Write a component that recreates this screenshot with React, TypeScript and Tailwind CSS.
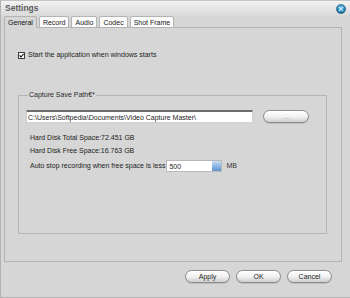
import { useState } from "react";

const TABS = ["General", "Record", "Audio", "Codec", "Shot Frame"];

function PillButton({ label, className = "" }: { label: string; className?: string }) {
  return (
    <button
      className={
        "flex h-[13px] w-[45px] items-center justify-center rounded-full border border-[#8c8c8c] bg-gradient-to-b from-[#ffffff] via-[#f1f1f1] to-[#cfcfcf] leading-none shadow-[0_1px_0_#bdbdbd] " +
        className
      }
    >
      {label}
    </button>
  );
}

function CloseButton() {
  return (
    <svg width="10" height="10" viewBox="0 0 10 10">
      <defs>
        <radialGradient id="cb" cx="50%" cy="40%" r="60%">
          <stop offset="0%" stopColor="#7fd0f2" />
          <stop offset="60%" stopColor="#2f8fc4" />
          <stop offset="100%" stopColor="#16577f" />
        </radialGradient>
      </defs>
      <circle cx="5" cy="5" r="4.6" fill="url(#cb)" stroke="#2a5f80" strokeWidth="0.6" />
      <path d="M3.3 3.3 L6.7 6.7 M6.7 3.3 L3.3 6.7" stroke="#d9f1fb" strokeWidth="1.1" strokeLinecap="round" />
    </svg>
  );
}

export default function App() {
  const [tab, setTab] = useState("General");
  const [autoStart, setAutoStart] = useState(true);

  return (
    <div className="flex h-[298px] w-[350px] flex-col overflow-hidden border-b border-l border-[#b2b2b2] bg-[#d6d6d6] font-['Liberation_Sans',Arial,sans-serif] text-[7px] text-[#1c1c1c]">
      {/* title bar */}
      <div className="flex h-[16px] shrink-0 items-center justify-between border-t border-[#c4c4c4] bg-gradient-to-b from-[#f3f3f3] to-[#d9d9d9] pl-[4px] pr-[4px]">
        <span className="text-[8.5px] font-bold text-[#5b5b5b]">Settings</span>
        <CloseButton />
      </div>

      {/* tabs */}
      <div className="relative z-10 -mb-px flex h-[12px] shrink-0 gap-[2px] pl-[3px]">
        {TABS.map((t) => (
          <button
            key={t}
            onClick={() => setTab(t)}
            className={
              "flex h-[12px] items-center rounded-t-[2px] border border-[#b3b3b3] px-[3px] leading-none " +
              (tab === t ? "border-b-[#d6d6d6] bg-[#d6d6d6] text-[#111]" : "bg-[#fbfbfb] text-[#222]")
            }
          >
            {t}
          </button>
        ))}
      </div>

      {/* panel */}
      <div className="ml-[3px] flex h-[235px] w-[338px] shrink-0 flex-col border border-[#b3b3b3] pl-[13px] pt-[23px]">
        <label className="flex h-[8px] items-center gap-[3px]">
          <span
            onClick={() => setAutoStart(!autoStart)}
            className="flex h-[7px] w-[7px] items-center justify-center border border-[#3a3a3a] bg-white"
          >
            {autoStart && (
              <svg width="5" height="5" viewBox="0 0 5 5">
                <path d="M0.5 2.4 L2 4 L4.6 0.8" fill="none" stroke="#111" strokeWidth="1.1" />
              </svg>
            )}
          </span>
          <span>Start the application when windows starts</span>
        </label>

        <fieldset className="mt-[32px] h-[143px] w-[309px] border border-[#b5b5b5] pl-[7px]">
          <legend className="ml-[2px] px-[1px] leading-[8px] text-[#2a2a2a]">Capture Save Path€*</legend>

          <div className="mt-[11px] flex items-center">
            <div className="flex h-[13px] w-[227px] items-center border-x border-b border-t-2 border-[#cfcfcf] border-t-[#6e6e6e] bg-white pl-[1px] leading-none">
              C:\Users\Softpedia\Documents\Video Capture Master\
            </div>
            <button className="-mt-[1px] ml-[10px] flex h-[13px] w-[46px] items-center justify-center rounded-full border border-[#8c8c8c] bg-gradient-to-b from-[#ffffff] via-[#f1f1f1] to-[#cfcfcf] leading-none text-[#8a8a8a] shadow-[0_1px_0_#bdbdbd]">
              ...
            </button>
          </div>

          <div className="mt-[8px] pl-[4px] leading-[13px]">Hard Disk Total Space:72.451 GB</div>
          <div className="pl-[4px] leading-[13px]">Hard Disk Free Space:16.763 GB</div>

          <div className="mt-[3px] flex h-[12px] items-center pl-[4px]">
            <span>Auto stop recording when free space is less</span>
            <div className="ml-[1px] flex h-[12px] w-[56px] items-stretch border border-[#b9b9b9] bg-white">
              <span className="flex flex-1 items-center pl-[2px] leading-none">500</span>
              <span className="w-[9px] bg-gradient-to-b from-[#c9def2] via-[#8db8e4] to-[#5f95cf]" />
            </div>
            <span className="ml-[4px] text-[#333]">MB</span>
          </div>
        </fieldset>
      </div>

      {/* footer buttons */}
      <div className="mt-[8px] flex justify-end gap-[6px] pr-[18px]">
        <PillButton label="Apply" />
        <PillButton label="OK" />
        <PillButton label="Cancel" />
      </div>
    </div>
  );
}
